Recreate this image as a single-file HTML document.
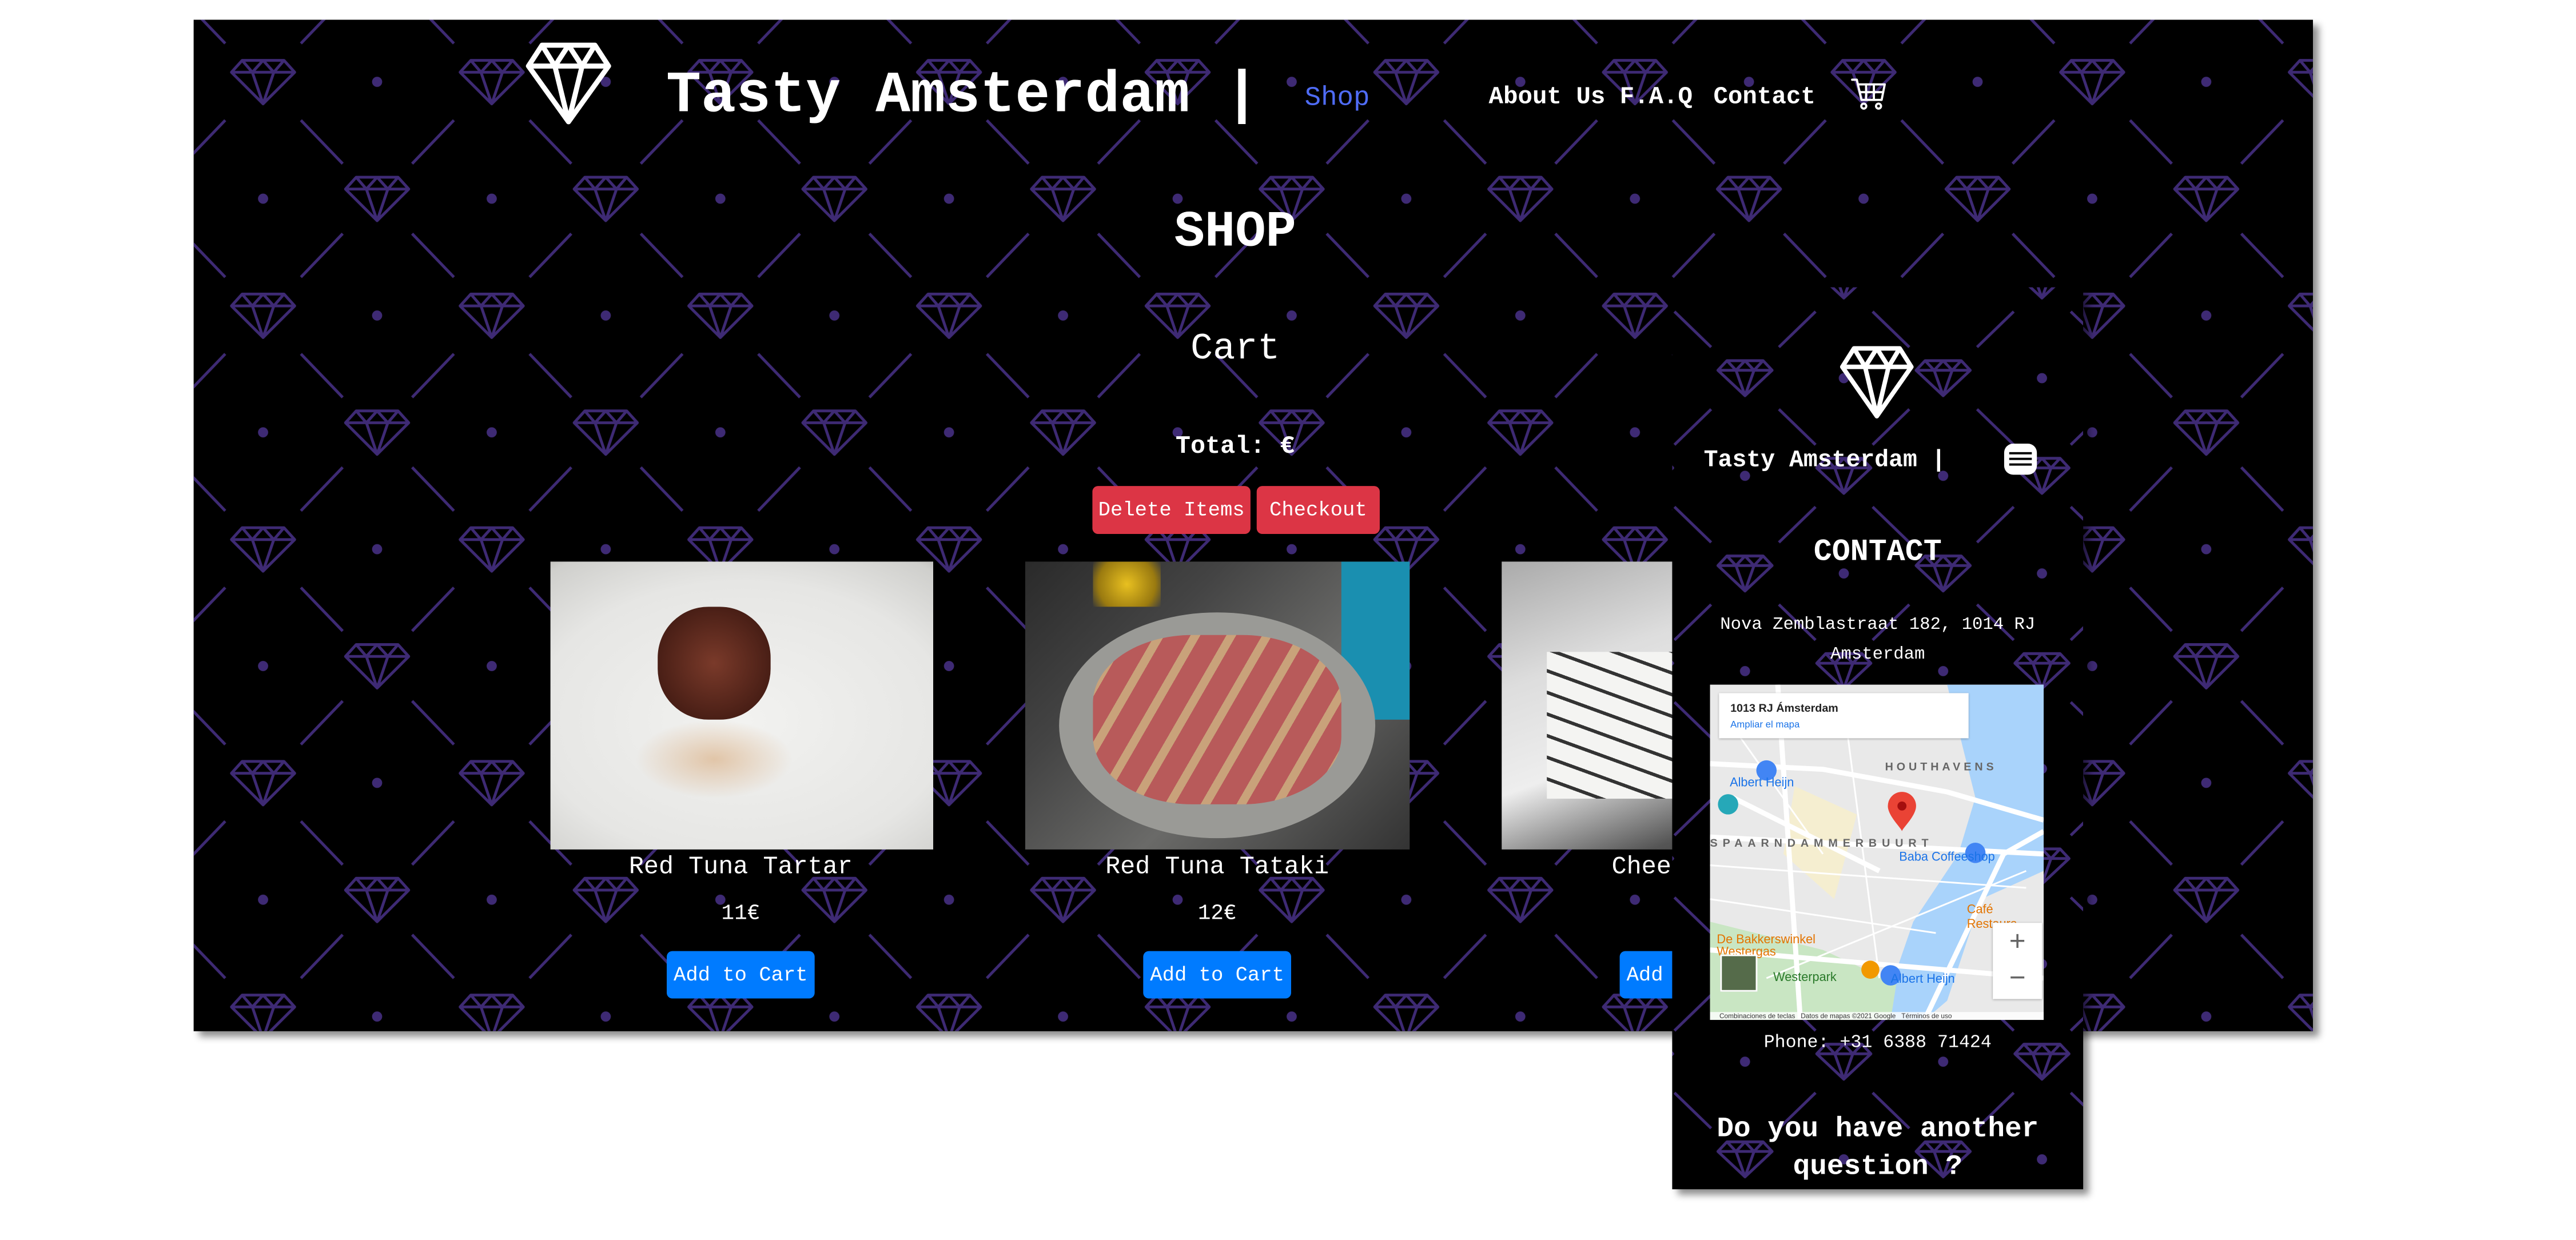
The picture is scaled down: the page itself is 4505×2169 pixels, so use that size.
<!DOCTYPE html>
<html><head><meta charset="utf-8">
<style>
html,body{margin:0;padding:0;background:#fff;width:4505px;height:2169px;overflow:hidden;position:relative;font-family:"Liberation Mono","DejaVu Sans Mono",monospace}
#root{position:absolute;left:0;top:0;width:4600px;height:2200px;transform:scale(0.9873);transform-origin:0 0}
.abs{position:absolute;white-space:nowrap;line-height:1}
.frame{position:absolute;background:#000;overflow:hidden}
.w{color:#fff}
.c{transform:translateX(-50%)}
.btn{position:absolute;border-radius:10px;color:#fff;font-size:36px;display:flex;align-items:center;justify-content:center}
.img{position:absolute;overflow:hidden}
</style></head><body>
<svg width="0" height="0" style="position:absolute">
<defs>
<g id="dm" fill="none" stroke="#3e2a74" stroke-width="5" stroke-linejoin="round">
<path d="M-37,-38 L37,-38 L56,-17 L0,39 L-56,-17 Z M-56,-17 L56,-17 M-37,-38 L-19,-17 L0,-38 L19,-17 L37,-38 M-19,-17 L0,39 L19,-17"/>
</g>
<g id="dmm" fill="none" stroke="#3e2a74" stroke-width="5" stroke-linejoin="round">
<path d="M-32,-31 L32,-31 L48,-14 L0,31 L-48,-14 Z M-48,-14 L48,-14 M-32,-31 L-16,-14 L0,-31 L16,-14 L32,-31 M-16,-14 L0,31 L16,-14"/>
</g>
<pattern id="pd" patternUnits="userSpaceOnUse" width="405" height="414" x="123" y="110">
<g stroke="#3e2a74" stroke-width="5">
<line x1="67" y1="68" x2="141" y2="145"/>
<line x1="338" y1="68" x2="264" y2="145"/>
<line x1="67" y1="346" x2="141" y2="269"/>
<line x1="338" y1="346" x2="264" y2="269"/>
</g>
<use href="#dm" x="0" y="0"/><use href="#dm" x="405" y="0"/><use href="#dm" x="0" y="414"/><use href="#dm" x="405" y="414"/><use href="#dm" x="202" y="207"/>
<g fill="#3e2a74"><ellipse cx="202" cy="0" rx="9" ry="9"/><ellipse cx="202" cy="414" rx="9" ry="9"/><ellipse cx="0" cy="207" rx="9" ry="9"/><ellipse cx="405" cy="207" rx="9" ry="9"/></g>
</pattern>
<pattern id="pm" patternUnits="userSpaceOnUse" width="351" height="346" x="129" y="161">
<g stroke="#3e2a74" stroke-width="5">
<line x1="60" y1="55" x2="125" y2="118"/>
<line x1="291" y1="55" x2="226" y2="118"/>
<line x1="60" y1="291" x2="125" y2="228"/>
<line x1="291" y1="291" x2="226" y2="228"/>
</g>
<use href="#dmm" x="0" y="0"/><use href="#dmm" x="351" y="0"/><use href="#dmm" x="0" y="346"/><use href="#dmm" x="351" y="346"/><use href="#dmm" x="175" y="173"/>
<g fill="#3e2a74"><circle cx="175" cy="0" r="9"/><circle cx="175" cy="346" r="9"/><circle cx="0" cy="173" r="9"/><circle cx="351" cy="173" r="9"/></g>
</pattern>
</defs></svg>
<div id="root">
<!-- Desktop -->
<div class="frame" style="left:343px;top:35px;width:3754px;height:1792px;box-shadow:10px 10px 12px rgba(0,0,0,.45)">
<svg width="3754" height="1792" style="position:absolute;left:0;top:0"><rect width="3754" height="1792" fill="url(#pd)"/></svg>
</div>
<svg class="abs" style="left:931px;top:73px" width="152" height="148" viewBox="-60 -42 120 84" preserveAspectRatio="none">
<path d="M-37,-38 L37,-38 L56,-17 L0,39 L-56,-17 Z M-56,-17 L56,-17 M-37,-38 L-19,-17 L0,-38 L19,-17 L37,-38 M-19,-17 L0,39 L19,-17" fill="none" stroke="#fff" vector-effect="non-scaling-stroke" style="stroke-width:9px" stroke-linejoin="round"/>
</svg>
<div class="abs w" style="left:1180px;top:118px;font-size:103px;font-weight:bold">Tasty Amsterdam |</div>
<div class="abs" style="left:2311px;top:150px;font-size:48px;color:#4f6cf6">Shop</div>
<div class="abs w" style="left:2637px;top:150px;font-size:43px;font-weight:bold">About Us</div>
<div class="abs w" style="left:2869px;top:150px;font-size:43px;font-weight:bold">F.A.Q</div>
<div class="abs w" style="left:3035px;top:150px;font-size:43px;font-weight:bold">Contact</div>
<svg class="abs" style="left:3278px;top:135px" width="66" height="62" viewBox="0 0 24 22" fill="none" stroke="#fff" stroke-width="1.4" stroke-linejoin="round" stroke-linecap="round">
<path d="M1,2 H4 L7,15 H20 L22,5 H5"/><path d="M6,10 H21 M10,5 V15 M15,5 V15"/><circle cx="8.5" cy="19" r="1.6"/><circle cx="18" cy="19" r="1.6"/>
</svg>
<div class="abs w c" style="left:2188px;top:367px;font-size:90px;font-weight:bold">SHOP</div>
<div class="abs w c" style="left:2188px;top:585px;font-size:66px">Cart</div>
<div class="abs w c" style="left:2188px;top:769px;font-size:44px;font-weight:bold">Total: €</div>
<div class="btn" style="left:1935px;top:861px;width:280px;height:85px;background:#dc3545">Delete Items</div>
<div class="btn" style="left:2226px;top:861px;width:218px;height:85px;background:#dc3545">Checkout</div>

<div class="img" style="left:975px;top:995px;width:678px;height:510px;background:radial-gradient(ellipse 90% 80% at 50% 55%,#f2f2f0 0%,#e6e6e4 60%,#cfcfcc 85%,#9a9690 100%)">
<div style="position:absolute;left:190px;top:80px;width:200px;height:200px;border-radius:45%;background:radial-gradient(circle,#7a3a2a,#4a1f16 70%,#3a1a12)"></div>
<div style="position:absolute;left:150px;top:280px;width:280px;height:140px;border-radius:50%;background:radial-gradient(ellipse,rgba(200,120,40,.35),transparent 70%)"></div>
</div>
<div class="img" style="left:1816px;top:995px;width:681px;height:510px;background:linear-gradient(135deg,#2a2a2a 0%,#444 30%,#6a6a68 60%,#333 100%)">
<div style="position:absolute;left:560px;top:0;width:121px;height:280px;background:#1a8fb0"></div>
<div style="position:absolute;left:120px;top:0;width:120px;height:80px;background:radial-gradient(circle,#e8c020,#9a7a10 70%,transparent)"></div>
<div style="position:absolute;left:60px;top:90px;width:560px;height:400px;border-radius:50%;background:#9a9a96"></div>
<div style="position:absolute;left:120px;top:130px;width:440px;height:300px;border-radius:40%;background:repeating-linear-gradient(120deg,#b85a5a 0 40px,#c9a27a 40px 55px)"></div>
</div>
<div class="img" style="left:2660px;top:995px;width:678px;height:510px;background:linear-gradient(160deg,#aaa 0%,#ddd 30%,#eee 55%,#555 80%,#222 100%)">
<div style="position:absolute;left:80px;top:160px;width:420px;height:260px;background:repeating-linear-gradient(20deg,#f4f4f2 0 30px,#333 30px 36px)"></div>
</div>

<div class="abs w c" style="left:1312px;top:1514px;font-size:44px">Red Tuna Tartar</div>
<div class="abs w c" style="left:2156px;top:1514px;font-size:44px">Red Tuna Tataki</div>
<div class="abs w c" style="left:3000px;top:1514px;font-size:44px">Cheese Cake</div>
<div class="abs w c" style="left:1312px;top:1600px;font-size:38px">11€</div>
<div class="abs w c" style="left:2156px;top:1600px;font-size:38px">12€</div>
<div class="abs w c" style="left:3000px;top:1600px;font-size:38px">8€</div>
<div class="btn" style="left:1181px;top:1685px;width:262px;height:84px;background:#007bff">Add to Cart</div>
<div class="btn" style="left:2025px;top:1685px;width:262px;height:84px;background:#007bff">Add to Cart</div>
<div class="btn" style="left:2869px;top:1685px;width:262px;height:84px;background:#007bff">Add to Cart</div>

<!-- Mobile -->
<div class="frame" style="left:2962px;top:509px;width:728px;height:1598px;box-shadow:10px 10px 12px rgba(0,0,0,.45)">
<svg width="728" height="1598" style="position:absolute;left:0;top:0"><rect width="728" height="1598" fill="url(#pm)"/></svg>
<svg class="abs" style="left:297px;top:102px" width="131" height="131" viewBox="-60 -42 120 84" preserveAspectRatio="none">
<path d="M-37,-38 L37,-38 L56,-17 L0,39 L-56,-17 Z M-56,-17 L56,-17 M-37,-38 L-19,-17 L0,-38 L19,-17 L37,-38 M-19,-17 L0,39 L19,-17" fill="none" stroke="#fff" vector-effect="non-scaling-stroke" style="stroke-width:8px" stroke-linejoin="round"/>
</svg>
<div class="abs w" style="left:56px;top:285px;font-size:42px;font-weight:bold">Tasty Amsterdam |</div>
<div class="abs" style="left:588px;top:277px;width:58px;height:55px;background:#fff;border-radius:16px">
<div style="position:absolute;left:9px;top:15px;width:40px;height:4px;background:#000"></div>
<div style="position:absolute;left:9px;top:25px;width:40px;height:4px;background:#000"></div>
<div style="position:absolute;left:9px;top:35px;width:40px;height:4px;background:#000"></div>
</div>
<div class="abs w c" style="left:364px;top:443px;font-size:54px;font-weight:bold">CONTACT</div>
<div class="abs w c" style="left:364px;top:582px;font-size:31px">Nova Zemblastraat 182, 1014 RJ</div>
<div class="abs w c" style="left:364px;top:635px;font-size:31px">Amsterdam</div>
<div class="abs w c" style="left:364px;top:1322px;font-size:32px">Phone: +31 6388 71424</div>
<div class="abs w c" style="left:364px;top:1467px;font-size:50px;font-weight:bold">Do you have another</div>
<div class="abs w c" style="left:364px;top:1534px;font-size:50px;font-weight:bold">question ?</div>

<div style="position:absolute;left:67px;top:704px;width:591px;height:594px;background:#e9e9e9;overflow:hidden;font-family:'Liberation Sans',sans-serif">
<svg width="591" height="594" style="position:absolute;left:0;top:0">
<polygon points="420,0 591,0 591,330 480,380 420,560 380,594 300,594 360,420 440,300 470,200" fill="#a9d3fb"/>
<polygon points="0,420 200,470 330,530 320,594 0,594" fill="#c9e6c3"/>
<polygon points="150,180 260,230 220,380 130,300" fill="#f5eed0"/>
<g stroke="#fff" stroke-width="9" fill="none">
<path d="M0,140 L200,150 L420,190 L591,240"/><path d="M0,270 L591,300"/><path d="M120,0 L160,594"/><path d="M0,470 L591,520"/><path d="M380,594 L520,300 L591,260"/><path d="M40,200 L300,330"/>
</g>
<g stroke="#fff" stroke-width="3" fill="none"><path d="M0,320 L560,360 M30,60 L200,300 M240,60 L300,520 M0,380 L400,440 M100,520 L560,330"/></g>
<path d="M315,215 a25,25 0 1,1 50,0 c0,18 -25,40 -25,45 c0,-5 -25,-27 -25,-45z" fill="#ea4335"/>
<circle cx="340" cy="215" r="8" fill="#a50e0e"/>
<circle cx="100" cy="152" r="18" fill="#4285f4"/><circle cx="32" cy="212" r="18" fill="#26a8b8"/><circle cx="320" cy="515" r="18" fill="#4285f4"/><circle cx="470" cy="298" r="18" fill="#4285f4"/><circle cx="284" cy="505" r="16" fill="#f29900"/>
</svg>
<div style="position:absolute;left:16px;top:15px;width:442px;height:80px;background:#fff;box-shadow:0 1px 4px rgba(0,0,0,.3)">
<div style="position:absolute;left:20px;top:16px;font-size:20px;color:#222;font-weight:bold">1013 RJ Ámsterdam</div>
<div style="position:absolute;left:20px;top:46px;font-size:17px;color:#1a73e8">Ampliar el mapa</div>
</div>
<div style="position:absolute;left:35px;top:160px;font-size:22px;color:#1a73e8">Albert Heijn</div>
<div style="position:absolute;left:310px;top:135px;font-size:20px;color:#666;letter-spacing:6px;font-weight:bold">HOUTHAVENS</div>
<div style="position:absolute;left:0;top:270px;font-size:20px;color:#666;letter-spacing:9px;font-weight:bold">SPAARNDAMMERBUURT</div>
<div style="position:absolute;left:335px;top:292px;font-size:22px;color:#1a73e8">Baba Coffeeshop</div>
<div style="position:absolute;left:455px;top:385px;font-size:22px;color:#e37400">Café Restaura</div>
<div style="position:absolute;left:12px;top:440px;font-size:22px;color:#e37400;line-height:1">De Bakkerswinkel<br>Westergas</div>
<div style="position:absolute;left:112px;top:505px;font-size:22px;color:#2a7a2a">Westerpark</div>
<div style="position:absolute;left:320px;top:508px;font-size:22px;color:#1a73e8">Albert Heijn</div>
<div style="position:absolute;left:18px;top:478px;width:60px;height:60px;border:3px solid #fff;background:#556b4a"></div>
<div style="position:absolute;left:501px;top:422px;width:87px;height:135px;background:#fff;box-shadow:0 1px 4px rgba(0,0,0,.3);font-size:50px;color:#666;text-align:center;line-height:64px">+<br>−</div>
<div style="position:absolute;left:0;top:580px;width:591px;height:14px;background:rgba(255,255,255,.8);font-size:12px;color:#333;line-height:14px;white-space:nowrap">&nbsp;&nbsp;&nbsp;&nbsp;&nbsp;Combinaciones de teclas&nbsp;&nbsp;&nbsp;Datos de mapas ©2021 Google&nbsp;&nbsp;&nbsp;Términos de uso</div>
</div>
</div>
</div>
</body></html>
